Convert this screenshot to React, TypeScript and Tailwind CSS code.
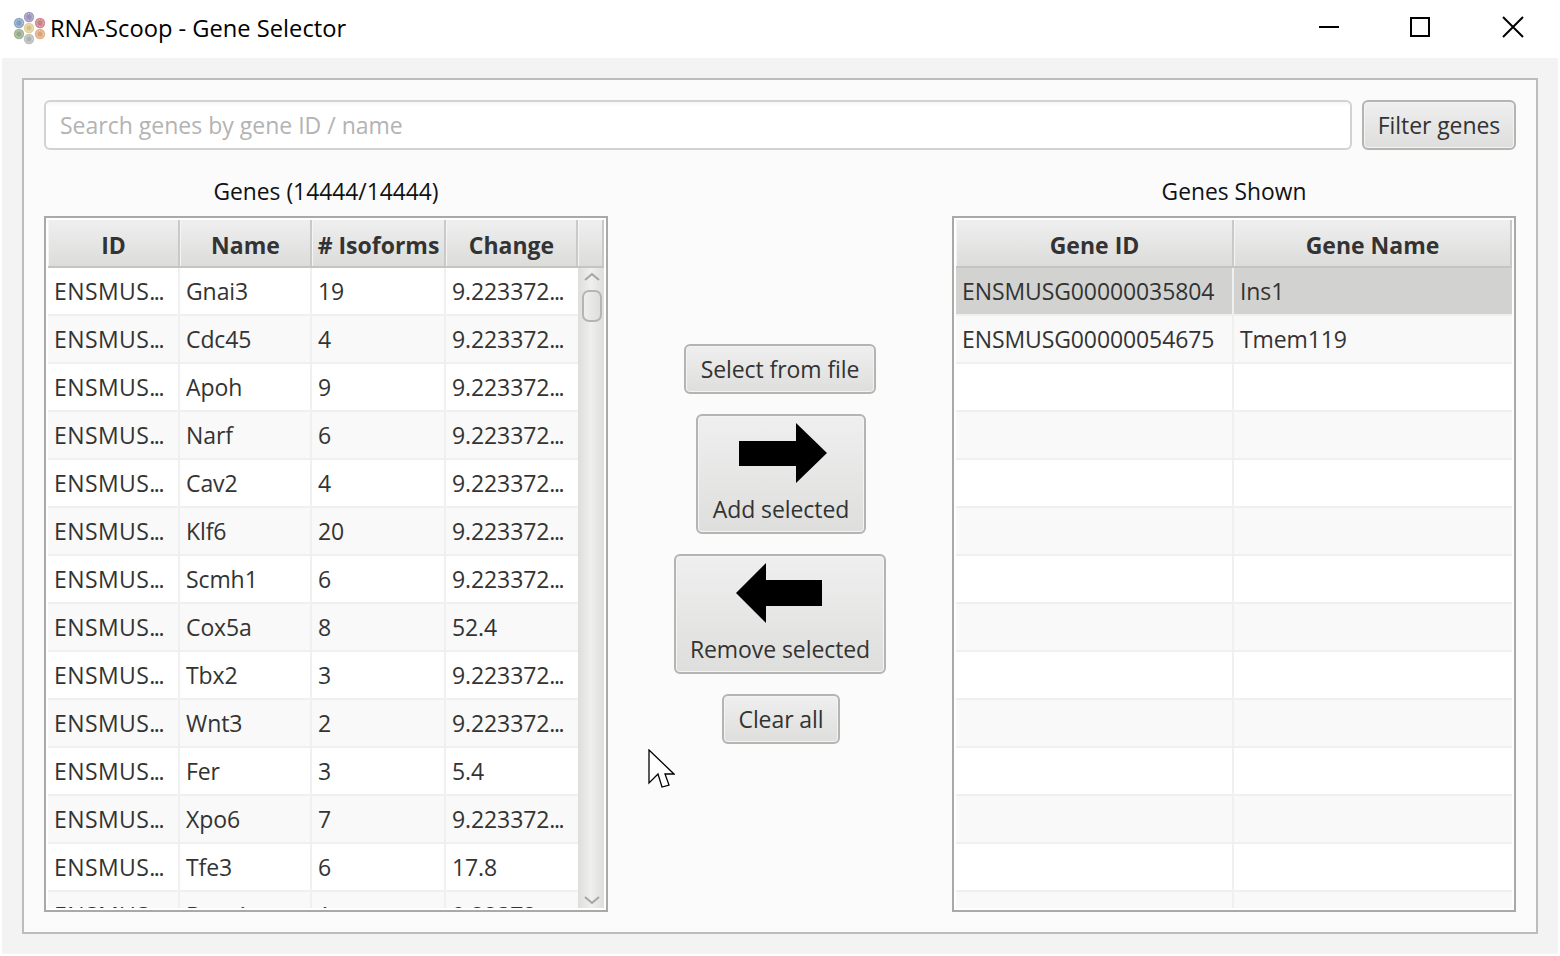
const FONT = "font-['Open_Sans','Noto_Sans',sans-serif]";

const GENES = [
  ['ENSMUS...', 'Gnai3', '19', '9.223372...'],
  ['ENSMUS...', 'Cdc45', '4', '9.223372...'],
  ['ENSMUS...', 'Apoh', '9', '9.223372...'],
  ['ENSMUS...', 'Narf', '6', '9.223372...'],
  ['ENSMUS...', 'Cav2', '4', '9.223372...'],
  ['ENSMUS...', 'Klf6', '20', '9.223372...'],
  ['ENSMUS...', 'Scmh1', '6', '9.223372...'],
  ['ENSMUS...', 'Cox5a', '8', '52.4'],
  ['ENSMUS...', 'Tbx2', '3', '9.223372...'],
  ['ENSMUS...', 'Wnt3', '2', '9.223372...'],
  ['ENSMUS...', 'Fer', '3', '5.4'],
  ['ENSMUS...', 'Xpo6', '7', '9.223372...'],
  ['ENSMUS...', 'Tfe3', '6', '17.8'],
  ['ENSMUS...', 'Dgat1', '1', '9.22372'],
];

const SHOWN = [
  ['ENSMUSG00000035804', 'Ins1'],
  ['ENSMUSG00000054675', 'Tmem119'],
  ...Array.from({ length: 12 }, () => ['', '']),
];

const LEFT_COLS = ['w-[132px]', 'w-[132px]', 'w-[134px]', 'w-[132px]'];
const RIGHT_COLS = ['w-[278px]', 'w-[278px]'];

function HeaderCell({ label, width }: { label: string; width: string }) {
  return (
    <div className={`${width} flex h-full shrink-0 items-center justify-center border-r-2 border-[#c9cac8] border-l border-l-[#f4f5f4] bg-gradient-to-b from-[#eeefee] to-[#dcdddb] pt-[4px] text-[23px] font-bold whitespace-nowrap text-[#333]`}>
      {label}
    </div>
  );
}

/** JavaFX clips with tight dots, so the trailing "..." gets narrower spacing. */
function CellText({ value }: { value: string }) {
  if (!value.endsWith('...')) return <>{value}</>;
  const head = value.slice(0, -3);
  return (
    <>
      <span className={head === 'ENSMUS' ? 'tracking-[0.4px]' : ''}>{head}</span>
      <span className="tracking-[-1.4px]">...</span>
    </>
  );
}

function Row({ cells, cols, index, selected }: { cells: string[]; cols: string[]; index: number; selected?: boolean }) {
  const bg = selected ? 'bg-[#d2d3d1]' : index % 2 === 0 ? 'bg-white' : 'bg-[#f8f9f8]';
  return (
    <div className={`flex h-[48px] shrink-0 border-b-2 border-[#eff0ef] ${bg}`}>
      {cells.map((c, i) => (
        <div key={i} className={`${cols[i]} shrink-0 overflow-hidden border-r-2 border-[#eff0ef] pl-[6px] text-[23px] leading-[47px] tracking-[-0.1px] whitespace-nowrap text-[#333] last:border-r-0`}>
          <CellText value={c} />
        </div>
      ))}
    </div>
  );
}

function Scrollbar() {
  return (
    <div className="flex w-[26px] shrink-0 flex-col items-center bg-gradient-to-r from-[#dedfdd] via-[#eeefee] to-[#dedfdd] pl-[2px]">
      <svg width="16" height="10" viewBox="0 0 16 10" className="mt-[4px]">
        <path d="M1 8 L8 2 L15 8" fill="none" stroke="#a5a6a4" strokeWidth="2" />
      </svg>
      <div className="mt-[8px] h-[32px] w-[20px] rounded-[7px] border-2 border-[#b5b6b4] bg-gradient-to-r from-[#eeefee] to-[#dedfdd]" />
      <div className="flex-1" />
      <svg width="16" height="10" viewBox="0 0 16 10" className="mb-[3px]">
        <path d="M1 2 L8 8 L15 2" fill="none" stroke="#a5a6a4" strokeWidth="2" />
      </svg>
    </div>
  );
}

function Btn({ children, className }: { children: React.ReactNode; className: string }) {
  return (
    <button className={`${className} flex shrink-0 flex-col items-center justify-center rounded-[6px] border-2 border-[#b4b5b3] bg-gradient-to-b from-[#eeefee] to-[#dedfdd] text-[23px] tracking-[-0.08px] whitespace-nowrap text-[#333] shadow-[inset_0_0_0_1px_#f2f3f2]`}>
      {children}
    </button>
  );
}

function Logo() {
  const dots = [
    [29, 16, '#a59bc6'],
    [40, 22, '#d28a90'],
    [40, 33, '#e4b186'],
    [29, 38, '#bdbebe'],
    [19, 33, '#a0b594'],
    [19, 22, '#8ea8cc'],
    [29, 27, '#e6d097'],
  ] as const;
  return (
    <svg width="36" height="36" viewBox="12 10 36 36" className="shrink-0">
      {dots.map(([x, y, c]) => (
        <g key={`${x}-${y}`}>
          <circle cx={x} cy={y} r="5.2" fill={c} />
          <circle cx={x} cy={y} r="3.4" fill="none" stroke="#fff" strokeOpacity="0.45" strokeWidth="1" strokeDasharray="1.2 1.2" />
          <circle cx={x} cy={y} r="1.4" fill="none" stroke="#555" strokeOpacity="0.25" strokeWidth="0.8" />
        </g>
      ))}
    </svg>
  );
}

export default function App() {
  return (
    <div className={`${FONT} relative flex h-[956px] w-[1560px] flex-col overflow-hidden bg-white`}>
      {/* Title bar */}
      <div className="flex h-[58px] shrink-0 items-center">
        <div className="ml-[12px]">
          <Logo />
        </div>
        <span className="ml-[2px] text-[23.7px] text-black">RNA-Scoop - Gene Selector</span>
        <div className="mb-[4px] ml-auto flex items-center">
          <svg width="22" height="22" viewBox="0 0 22 22" className="mr-[69px]">
            <path d="M1 11 H21" stroke="#000" strokeWidth="2" />
          </svg>
          <svg width="22" height="22" viewBox="0 0 22 22" className="mr-[71px]">
            <rect x="2" y="2" width="18" height="18" fill="none" stroke="#000" strokeWidth="2" />
          </svg>
          <svg width="22" height="22" viewBox="0 0 22 22" className="mr-[36px]">
            <path d="M1 1 L21 21 M21 1 L1 21" stroke="#000" strokeWidth="2" />
          </svg>
        </div>
      </div>

      {/* Stage */}
      <div className="mx-[2px] mb-[2px] flex-1 bg-[#f2f3f2] px-[20px] pt-[20px] pb-[20px]">
        <div className="flex h-full flex-col border-2 border-[#bcbdbb] bg-[#fafbfa] px-[20px] pt-[20px]">
          {/* Search */}
          <div className="flex h-[50px] shrink-0 gap-[10px]">
            <div className="flex flex-1 items-center rounded-[6px] border-2 border-[#d2d3d1] bg-gradient-to-b from-[#f6f6f6] to-white to-[10%] pl-[14px] text-[23px] text-[#b3b3b3]">
              Search genes by gene ID / name
            </div>
            <Btn className="w-[154px]">Filter genes</Btn>
          </div>

          <div className="mt-[28px] flex flex-1 justify-between">
            {/* Left table */}
            <div className="flex w-[564px] flex-col">
              <div className="h-[38px] text-center text-[22.8px] leading-[28px] text-[#111]">Genes (14444/14444)</div>
              <div className="flex h-[696px] flex-col overflow-hidden border-2 border-[#a9aaa8] bg-white p-[2px]">
                <div className="flex h-[48px] shrink-0 border-b-2 border-[#c4c5c3]">
                  <HeaderCell label="ID" width="w-[132px]" />
                  <HeaderCell label="Name" width="w-[132px]" />
                  <HeaderCell label="# Isoforms" width="w-[134px]" />
                  <HeaderCell label="Change" width="w-[132px]" />
                  <HeaderCell label="" width="flex-1" />
                </div>
                <div className="flex min-h-0 flex-1">
                  <div className="flex flex-1 flex-col overflow-hidden">
                    {GENES.map((g, i) => (
                      <Row key={g[1]} cells={g} cols={LEFT_COLS} index={i} />
                    ))}
                  </div>
                  <Scrollbar />
                </div>
              </div>
            </div>

            {/* Buttons */}
            <div className="flex flex-1 flex-col items-center gap-[20px] pt-[166px]">
              <Btn className="h-[50px] w-[192px]">Select from file</Btn>
              <Btn className="ml-[2px] h-[120px] w-[170px] gap-[10px] pb-[1px]">
                <svg width="88" height="60" viewBox="0 0 88 60" className="ml-[4px]">
                  <path d="M0 18 H57 V0 L88 30 L57 60 V43 H0 Z" fill="#000" />
                </svg>
                <span className="leading-[32px]">Add selected</span>
              </Btn>
              <Btn className="h-[120px] w-[212px] gap-[10px] pb-[1px]">
                <svg width="86" height="60" viewBox="0 0 86 60" className="mr-[2px]">
                  <path d="M86 17 H30 V0 L0 30 L30 60 V43 H86 Z" fill="#000" />
                </svg>
                <span className="leading-[32px]">Remove selected</span>
              </Btn>
              <Btn className="ml-[2px] h-[50px] w-[118px]">Clear all</Btn>
            </div>

            {/* Right table */}
            <div className="flex w-[564px] flex-col">
              <div className="h-[38px] text-center text-[22.8px] leading-[28px] text-[#111]">Genes Shown</div>
              <div className="flex h-[696px] flex-col overflow-hidden border-2 border-[#a9aaa8] bg-white p-[2px]">
                <div className="flex h-[48px] shrink-0 border-b-2 border-[#c4c5c3]">
                  <HeaderCell label="Gene ID" width="w-[278px]" />
                  <HeaderCell label="Gene Name" width="w-[278px]" />
                </div>
                <div className="flex min-h-0 flex-1 flex-col overflow-hidden">
                  {SHOWN.map((g, i) => (
                    <Row key={i} cells={g} cols={RIGHT_COLS} index={i} selected={i === 0} />
                  ))}
                </div>
              </div>
            </div>
          </div>
        </div>
      </div>

      {/* Mouse pointer */}
      <svg width="27" height="40" viewBox="0 0 27 40" className="absolute top-[749px] left-[648px]">
        <path d="M1 1 L26 25 L17 25 L21 36 L14 38 L10 25 L1 34 Z" fill="#fff" stroke="#000" strokeWidth="1.3" />
      </svg>
    </div>
  );
}
